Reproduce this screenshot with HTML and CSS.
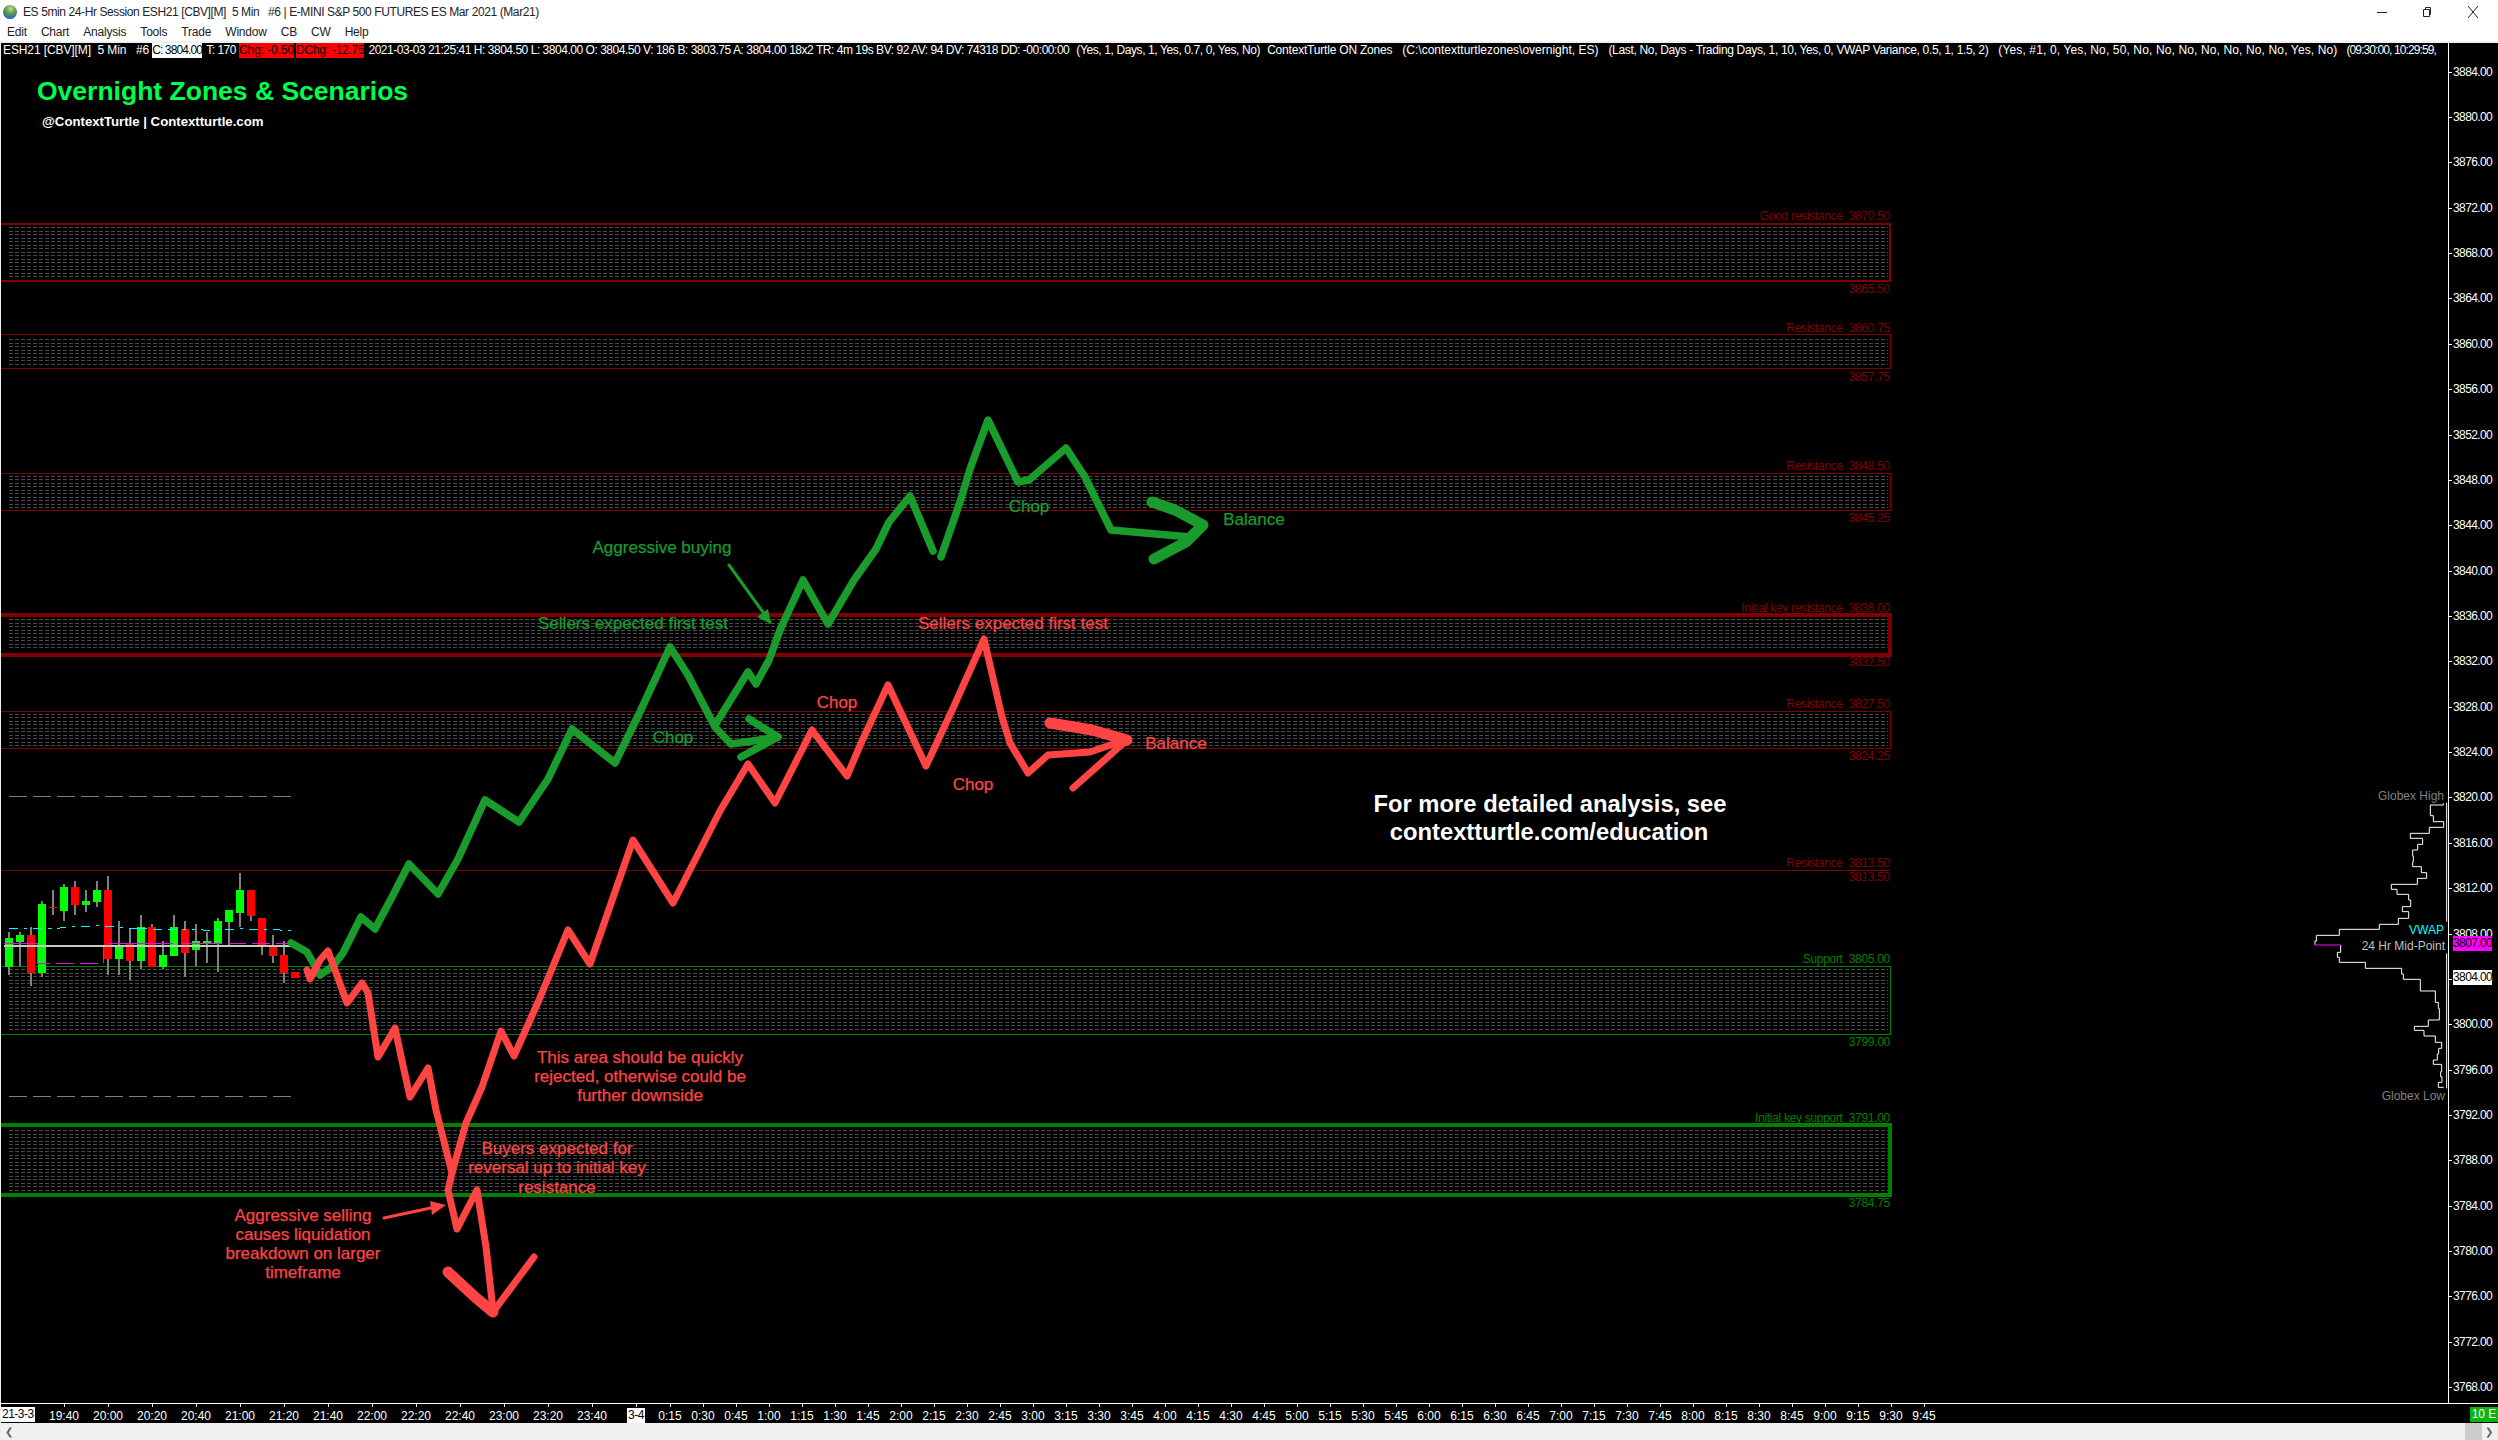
FILE: index.html
```html
<!DOCTYPE html>
<html lang="en">
<head>
    <meta charset="UTF-8">
    <meta name="viewport" content="width=device-width, initial-scale=1.0">
    <title>ES 5min 24-Hr Session ESH21</title>
    <link rel="stylesheet" href="styles.css">
</head>
<body>
    <header class="title-bar">
        <svg class="app-icon" width="14" height="16" viewBox="0 0 14 16">
            <defs>
                <radialGradient id="globe" cx="55%" cy="25%" r="85%">
                    <stop offset="0" stop-color="#c4dc8c"/>
                    <stop offset="0.45" stop-color="#5a9a50"/>
                    <stop offset="1" stop-color="#1a5cb0"/>
                </radialGradient>
            </defs>
            <circle cx="7" cy="8" r="7" fill="url(#globe)"/>
            <path d="M1 11 Q7 15 13 11 Q11 15 7 15 Q3 15 1 11Z" fill="#2c74c4"/>
        </svg>
        <span class="title-text">ES 5min 24-Hr Session ESH21 [CBV][M]  5 Min   #6 | E-MINI S&amp;P 500 FUTURES ES Mar 2021 (Mar21)</span>
        <div class="window-buttons">
            <svg width="12" height="12" viewBox="0 0 12 12"><path d="M1 6.5H11" stroke="#222" fill="none"/></svg>
            <svg width="12" height="12" viewBox="0 0 12 12"><path d="M3.5 3.5H9.5V10.5H3.5ZM5.5 3.5V1.5H10.5V8.5H9.5" stroke="#222" fill="none"/></svg>
            <svg class="close-icon" width="12" height="14" viewBox="0 0 12 14"><path d="M1 1L11 13M11 1L1 13" stroke="#222" fill="none"/></svg>
        </div>
    </header>

    <nav class="menu-bar">
        <span>Edit</span>
        <span>Chart</span>
        <span>Analysis</span>
        <span>Tools</span>
        <span>Trade</span>
        <span>Window</span>
        <span>CB</span>
        <span>CW</span>
        <span>Help</span>
    </nav>

    <main class="chart-window">
        <div class="chart-row">
            <div class="plot">
                <svg class="plot-canvas" width="2447" height="1360" viewBox="1 43 2447 1360">
                    <defs>
                        <pattern id="dots" x="9" y="0" width="6" height="7" patternUnits="userSpaceOnUse">
                            <rect width="4" height="1" fill="#4a4a4a"/>
                            <rect y="3" width="4" height="1" fill="#4a4a4a"/>
                        </pattern>
                    </defs>

                    <!-- zones -->
                    <g class="zones">
                        <rect class="fill" x="9" y="227" width="1879" height="52"/>
                        <rect class="fill" x="9" y="337" width="1879" height="29"/>
                        <rect class="fill" x="9" y="476" width="1879" height="32"/>
                        <rect class="fill" x="9" y="619" width="1879" height="32"/>
                        <rect class="fill" x="9" y="714" width="1879" height="32"/>
                        <rect class="fill" x="9" y="969" width="1879" height="63"/>
                        <rect class="fill" x="9" y="1129" width="1879" height="62"/>

                        <rect class="edge red w2" x="-5" y="224" width="1895" height="57"/>
                        <rect class="edge red" x="-5" y="334.5" width="1895" height="34"/>
                        <rect class="edge red" x="-5" y="473.5" width="1895" height="37"/>
                        <rect class="edge red w4" x="-5" y="615" width="1895" height="40"/>
                        <rect class="edge red" x="-5" y="711.5" width="1895" height="37"/>
                        <path class="edge red" d="M0 870.5H1890"/>
                        <rect class="edge green" x="-5" y="966.5" width="1895" height="68"/>
                        <rect class="edge green w4" x="-5" y="1125" width="1895" height="70"/>
                    </g>

                    <g class="zone-labels red">
                        <text x="1890" y="216">Good resistance  3870.50</text>
                        <text x="1890" y="289">3865.50</text>
                        <text x="1890" y="328">Resistance  3860.75</text>
                        <text x="1890" y="377">3857.75</text>
                        <text x="1890" y="466">Resistance  3848.50</text>
                        <text x="1890" y="518">3845.25</text>
                        <text x="1890" y="608">Initial key resistance  3836.00</text>
                        <text x="1890" y="662">3832.50</text>
                        <text x="1890" y="704">Resistance  3827.50</text>
                        <text x="1890" y="756">3824.25</text>
                        <text x="1890" y="863">Resistance  3813.50</text>
                        <text x="1890" y="877">3813.50</text>
                    </g>
                    <g class="zone-labels green">
                        <text x="1890" y="959">Support  3805.00</text>
                        <text x="1890" y="1042">3799.00</text>
                        <text x="1890" y="1118">Initial key support  3791.00</text>
                        <text x="1890" y="1203">3784.75</text>
                    </g>

                    <path class="globex-line" d="M9 796.5H291M9 1096.5H291"/>

                    <!-- candles, drawn in 3x units -->
                    <g transform="translate(0 780) scale(0.33333)" shape-rendering="crispEdges">
                        <g class="wicks">
                            <rect x="24" y="456" width="6" height="129"/>
                            <rect x="57" y="456" width="6" height="102"/>
                            <rect x="90" y="441" width="6" height="177"/>
                            <rect x="123" y="363" width="6" height="228"/>
                            <rect x="156" y="330" width="6" height="75"/>
                            <rect x="189" y="312" width="6" height="111"/>
                            <rect x="222" y="303" width="6" height="102"/>
                            <rect x="255" y="330" width="6" height="66"/>
                            <rect x="288" y="303" width="6" height="78"/>
                            <rect x="321" y="288" width="6" height="297"/>
                            <rect x="354" y="423" width="6" height="162"/>
                            <rect x="387" y="444" width="6" height="156"/>
                            <rect x="420" y="405" width="6" height="162"/>
                            <rect x="453" y="432" width="6" height="129"/>
                            <rect x="486" y="483" width="6" height="84"/>
                            <rect x="519" y="405" width="6" height="123"/>
                            <rect x="552" y="423" width="6" height="168"/>
                            <rect x="585" y="432" width="6" height="126"/>
                            <rect x="618" y="456" width="6" height="93"/>
                            <rect x="651" y="414" width="6" height="162"/>
                            <rect x="684" y="390" width="6" height="108"/>
                            <rect x="717" y="279" width="6" height="162"/>
                            <rect x="750" y="330" width="6" height="93"/>
                            <rect x="783" y="414" width="6" height="111"/>
                            <rect x="816" y="465" width="6" height="84"/>
                            <rect x="849" y="483" width="6" height="126"/>
                        </g>
                        <g class="bodies-up">
                            <rect x="15" y="474" width="24" height="87"/>
                            <rect x="48" y="465" width="24" height="21"/>
                            <rect x="114" y="372" width="24" height="207"/>
                            <rect x="180" y="321" width="24" height="72"/>
                            <rect x="246" y="363" width="24" height="12"/>
                            <rect x="279" y="330" width="24" height="36"/>
                            <rect x="345" y="501" width="24" height="36"/>
                            <rect x="411" y="441" width="24" height="102"/>
                            <rect x="477" y="525" width="24" height="36"/>
                            <rect x="510" y="441" width="24" height="87"/>
                            <rect x="576" y="483" width="24" height="27"/>
                            <rect x="609" y="483" width="24" height="9"/>
                            <rect x="642" y="423" width="24" height="66"/>
                            <rect x="675" y="390" width="24" height="36"/>
                            <rect x="708" y="330" width="24" height="69"/>
                        </g>
                        <g class="bodies-down">
                            <rect x="81" y="465" width="24" height="114"/>
                            <rect x="147" y="381" width="24" height="3"/>
                            <rect x="213" y="321" width="24" height="54"/>
                            <rect x="312" y="330" width="24" height="207"/>
                            <rect x="378" y="489" width="24" height="54"/>
                            <rect x="444" y="441" width="24" height="120"/>
                            <rect x="543" y="447" width="24" height="72"/>
                            <rect x="741" y="330" width="24" height="78"/>
                            <rect x="774" y="414" width="24" height="81"/>
                            <rect x="807" y="501" width="24" height="27"/>
                            <rect x="840" y="525" width="24" height="54"/>
                            <rect x="873" y="576" width="24" height="18"/>
                        </g>
                        <path class="study cyan" d="M27 445H53M72 445H82M100 445H126M145 445H155M172 445H180M180 442H198M216 439H226M243 439H270M288 436H298M316 439H342M360 442H370M388 445H440M460 448H486M504 448H530M548 448H558M576 448H585M603 448H610M610 451H630M648 448H658M675 448H702M720 445H730M747 448H774M792 448H802M820 448H840M840 451H846M864 451H873"/>
                        <path class="study magenta" d="M12 490H112V550H150M168 550H222M240 550H294M310 498V548M324 490H520M545 490H665M688 490H738M757 490H810M828 490H870"/>
                        <path class="study mid" d="M12 498H870"/>
                    </g>

                    <!-- volume profile, drawn in 3x units -->
                    <g transform="translate(2250 770) scale(0.33333)">
                        <path class="profile" d="M580 100V105H541V137H550V155H581V172H538V190H481V205H518V223H503V240H488V258H490V275H488V290H514V308H530V325H502V343H424V358H441V373H476V390H482V410H457V425H476V445H445V463H388V478H268V496H199V513H195V525M272 525V547H262V562H268V577H346V595H455V612H460V628H511V663H556V697H565V715H568V750H535V769H493V781H522V798H556V817H575V835H566V852H562V870H550V883H575V905H572V920H576V937H565V952H581"/>
                        <path class="profile magenta-line" d="M195 525H272"/>
                        <path class="profile" d="M590 98V455M590 550V955"/>
                    </g>
                    <g class="side-labels">
                        <text class="dim" x="2444" y="796">Globex High</text>
                        <text class="vwap" x="2444" y="930">VWAP</text>
                        <text class="light" x="2445" y="946">24 Hr Mid-Point</text>
                        <text class="dim" x="2445" y="1096">Globex Low</text>
                    </g>

                    <!-- hand drawn scenarios -->
                    <g class="scribble green">
                        <polyline points="291,943 307,952 320,975 333,966 343,953 361,917 375,929 392,897 409,864 438,894 458,859 485,800 519,822 548,779 572,729 615,763 639,714 670,647 688,675 715,727 731,744 746,742 778,737"/>
                        <polyline points="749,719 778,737 741,757"/>
                        <polyline points="715,725 748,672 756,684 769,660 780,630 803,580 828,624 854,580 876,549 889,522 910,496 933,551"/>
                        <polyline points="941,557 961,499 970,469 988,420 1018,482 1029,480 1066,448 1085,477 1111,530 1190,537"/>
                        <polyline class="heavy" points="1152,502 1175,510 1203,525 1186,542 1154,559"/>
                    </g>
                    <path class="thin-arrow green" d="M729 565L770 622"/>
                    <path class="arrow-head green" d="M771 624L768 609L757 617Z"/>

                    <g class="scribble red">
                        <polyline points="307,970 310,979 320,960 328,951 335,970 347,1003 362,983 368,993 378,1057 395,1028 404,1070 410,1097 428,1068 436,1110 452,1173 448,1190 457,1229 477,1190 486,1247 493,1310"/>
                        <polyline class="heavy" points="448,1272 475,1297 493,1312"/>
                        <polyline points="493,1312 534,1257"/>
                        <polyline points="452,1173 466,1123 482,1087 501,1031 514,1056 539,1000 568,930 590,964 633,840 673,903 720,811 748,764 775,803 812,730 847,776 862,741 888,685 926,766 954,706 984,639 1002,717 1010,743 1028,773 1048,755 1090,752 1125,740"/>
                        <polyline class="heavy" points="1050,723 1092,730 1127,740"/>
                        <polyline points="1127,740 1073,788"/>
                    </g>
                    <path class="thin-arrow red" d="M384 1218L440 1206"/>
                    <path class="arrow-head red" d="M446 1205L430 1201L432 1215Z"/>

                    <!-- annotations -->
                    <text class="chart-title" x="37" y="91">Overnight Zones &amp; Scenarios</text>
                    <text class="chart-subtitle" x="42" y="121">@ContextTurtle | Contextturtle.com</text>

                    <g class="note green">
                        <text x="662" y="547">Aggressive buying</text>
                        <text x="633" y="623">Sellers expected first test</text>
                        <text x="673" y="737">Chop</text>
                        <text x="1029" y="506">Chop</text>
                        <text x="1254" y="519">Balance</text>
                    </g>
                    <g class="note red">
                        <text x="1013" y="623">Sellers expected first test</text>
                        <text x="837" y="702">Chop</text>
                        <text x="973" y="784">Chop</text>
                        <text x="1176" y="743">Balance</text>
                        <text x="640" y="1057">This area should be quickly</text>
                        <text x="640" y="1076">rejected, otherwise could be</text>
                        <text x="640" y="1095">further downside</text>
                        <text x="557" y="1148">Buyers expected for</text>
                        <text x="557" y="1167">reversal up to initial key</text>
                        <text x="557" y="1187">resistance</text>
                        <text x="303" y="1215">Aggressive selling</text>
                        <text x="303" y="1234">causes liquidation</text>
                        <text x="303" y="1253">breakdown on larger</text>
                        <text x="303" y="1272">timeframe</text>
                    </g>
                    <text class="promo" x="1550" y="803">For more detailed analysis, see</text>
                    <text class="promo" x="1549" y="831">contextturtle.com/education</text>
                </svg>

                <div class="info-line">
                    <span class="seg-symbol">ESH21 [CBV][M]  5 Min   #6</span>
                    <span class="chip-white">C: 3804.00</span>
                    <span class="seg-ticks">T: 170</span>
                    <span class="chip-red seg-chg">Chg: -0.50</span>
                    <span class="chip-red seg-dchg">DChg: -12.75</span>
                    <span class="seg-quote">2021-03-03 21:25:41 H: 3804.50 L: 3804.00 O: 3804.50 V: 186 B: 3803.75 A: 3804.00 18x2 TR: 4m 19s BV: 92 AV: 94 DV: 74318 DD: -00:00:00</span>
                    <span class="seg-a">(Yes, 1, Days, 1, Yes, 0.7, 0, Yes, No)</span>
                    <span class="seg-b">ContextTurtle ON Zones</span>
                    <span class="seg-c">(C:\contextturtlezones\overnight, ES)</span>
                    <span class="seg-d">(Last, No, Days - Trading Days, 1, 10, Yes, 0, VWAP Variance, 0.5, 1, 1.5, 2)</span>
                    <span class="seg-e">(Yes, #1, 0, Yes, No, 50, No, No, No, No, No, No, No, Yes, No)</span>
                    <span class="seg-f">(09:30:00, 10:29:59,</span>
                </div>
            </div>

            <div class="price-axis">
                <div class="price">3884.00</div>
                <div class="price">3880.00</div>
                <div class="price">3876.00</div>
                <div class="price">3872.00</div>
                <div class="price">3868.00</div>
                <div class="price">3864.00</div>
                <div class="price">3860.00</div>
                <div class="price">3856.00</div>
                <div class="price">3852.00</div>
                <div class="price">3848.00</div>
                <div class="price">3844.00</div>
                <div class="price">3840.00</div>
                <div class="price">3836.00</div>
                <div class="price">3832.00</div>
                <div class="price">3828.00</div>
                <div class="price">3824.00</div>
                <div class="price">3820.00</div>
                <div class="price">3816.00</div>
                <div class="price">3812.00</div>
                <div class="price">3808.00</div>
                <div class="price">3804.00</div>
                <div class="price">3800.00</div>
                <div class="price">3796.00</div>
                <div class="price">3792.00</div>
                <div class="price">3788.00</div>
                <div class="price">3784.00</div>
                <div class="price">3780.00</div>
                <div class="price">3776.00</div>
                <div class="price">3772.00</div>
                <div class="price">3768.00</div>
                <div class="price-flag flag-mid">3807.00</div>
                <div class="price-flag flag-last">3804.00</div>
            </div>
        </div>

        <div class="time-axis">
            <div class="day-start"><span class="date-chip">21-3-3</span></div>
            <div class="tick wide">19:40</div>
            <div class="tick wide">20:00</div>
            <div class="tick wide">20:20</div>
            <div class="tick wide">20:40</div>
            <div class="tick wide">21:00</div>
            <div class="tick wide">21:20</div>
            <div class="tick wide">21:40</div>
            <div class="tick wide">22:00</div>
            <div class="tick wide">22:20</div>
            <div class="tick wide">22:40</div>
            <div class="tick wide">23:00</div>
            <div class="tick wide">23:20</div>
            <div class="tick wide">23:40</div>
            <div class="tick wide"><span class="date-chip">3-4</span></div>
            <div class="tick after-date">0:15</div>
            <div class="tick">0:30</div>
            <div class="tick">0:45</div>
            <div class="tick">1:00</div>
            <div class="tick">1:15</div>
            <div class="tick">1:30</div>
            <div class="tick">1:45</div>
            <div class="tick">2:00</div>
            <div class="tick">2:15</div>
            <div class="tick">2:30</div>
            <div class="tick">2:45</div>
            <div class="tick">3:00</div>
            <div class="tick">3:15</div>
            <div class="tick">3:30</div>
            <div class="tick">3:45</div>
            <div class="tick">4:00</div>
            <div class="tick">4:15</div>
            <div class="tick">4:30</div>
            <div class="tick">4:45</div>
            <div class="tick">5:00</div>
            <div class="tick">5:15</div>
            <div class="tick">5:30</div>
            <div class="tick">5:45</div>
            <div class="tick">6:00</div>
            <div class="tick">6:15</div>
            <div class="tick">6:30</div>
            <div class="tick">6:45</div>
            <div class="tick">7:00</div>
            <div class="tick">7:15</div>
            <div class="tick">7:30</div>
            <div class="tick">7:45</div>
            <div class="tick">8:00</div>
            <div class="tick">8:15</div>
            <div class="tick">8:30</div>
            <div class="tick">8:45</div>
            <div class="tick">9:00</div>
            <div class="tick">9:15</div>
            <div class="tick">9:30</div>
            <div class="tick">9:45</div>
            <div class="mode-chip">10 E</div>
        </div>
    </main>

    <div class="scroll-bar">
        <span class="chevron">&#10094;</span>
        <span class="scroll-thumb"></span>
        <span class="chevron">&#10095;</span>
    </div>
</body>
</html>
```

FILE: styles.css
```css
html, body {
    margin: 0;
    padding: 0;
}

body {
    width: 2498px;
    height: 1440px;
    overflow: hidden;
    background-color: #fff;
    color: #222;
    font-family: "Liberation Sans Narrow", "Liberation Sans", Arial, sans-serif;
}

/* window chrome */
.title-bar {
    display: flex;
    align-items: center;
    height: 23px;
    padding-left: 3px;
    font-size: 12px;
    letter-spacing: -0.4px;
}

.app-icon {
    margin-right: 6px;
}

.title-text {
    white-space: pre;
}

.window-buttons {
    display: flex;
    align-items: center;
    gap: 32px;
    margin-left: auto;
    padding-right: 19px;
}

.close-icon {
    margin-left: 3px;
}

.menu-bar {
    display: flex;
    align-items: center;
    gap: 14px;
    height: 18px;
    padding-left: 7px;
    border-bottom: 2px solid #f0f0f0;
    font-size: 12px;
    letter-spacing: -0.2px;
}

/* chart */
.chart-window {
    border-left: 1px solid #f0f0f0;
    background-color: #000;
    color: #fff;
    font-size: 12px;
}

.chart-row {
    display: flex;
    height: 1360px;
}

.plot {
    position: relative;
    width: 2447px;
    overflow: hidden;
}

.plot-canvas {
    display: block;
}

/* each part of the status line was squeezed by a different amount */
.info-line {
    position: absolute;
    top: 0;
    left: 2px;
    display: flex;
    gap: 3px;
    height: 15px;
    line-height: 15px;
    white-space: pre;
    letter-spacing: -0.47px;
}

.seg-symbol {
    letter-spacing: -0.1px;
}

.chip-white {
    background-color: #fff;
    color: #000;
    letter-spacing: -0.87px;
}

.seg-ticks {
    margin-left: 1px;
}

.chip-red {
    background-color: #f00;
    color: #000;
}

.seg-chg {
    letter-spacing: -0.1px;
}

.seg-dchg {
    margin-left: -1px;
    letter-spacing: -0.25px;
}

.seg-quote {
    margin-left: 1px;
}

.seg-a {
    margin-left: 4px;
    letter-spacing: -0.39px;
}

.seg-b {
    margin-left: 4px;
    letter-spacing: -0.2px;
}

.seg-c {
    margin-left: 7px;
    letter-spacing: 0;
}

.seg-d {
    margin-left: 7px;
    letter-spacing: -0.33px;
}

.seg-e {
    margin-left: 7px;
    letter-spacing: 0.13px;
}

.seg-f {
    margin-left: 6px;
    letter-spacing: -0.9px;
}

/* zones */
.zones .fill {
    fill: url(#dots);
}

.edge {
    fill: none;
    stroke-width: 1;
    shape-rendering: crispEdges;
}

.edge.red {
    stroke: #800000;
}

.edge.green {
    stroke: #008000;
}

.edge.w2 {
    stroke-width: 2;
}

.edge.w4 {
    stroke-width: 4;
}

.zone-labels text {
    font-size: 12px;
    letter-spacing: -0.3px;
    text-anchor: end;
    dominant-baseline: central;
    white-space: pre;
}

.zone-labels.red text {
    fill: #800000;
}

.zone-labels.green text {
    fill: #008000;
}

.globex-line {
    stroke: #808080;
    stroke-width: 1;
    stroke-dasharray: 18 6;
    fill: none;
    shape-rendering: crispEdges;
}

/* candles */
.wicks rect {
    fill: #808080;
}

.bodies-up rect {
    fill: #0f0;
}

.bodies-down rect {
    fill: #f00;
}

.study {
    fill: none;
    stroke-width: 3;
}

.study.cyan {
    stroke: #0ff;
}

.study.magenta {
    stroke: #e010e0;
}

.study.mid {
    stroke: #c8c8c8;
    stroke-width: 6;
}

/* volume profile */
.profile {
    fill: none;
    stroke: #fff;
    stroke-width: 3;
}

.profile.magenta-line {
    stroke: #f0f;
}

.side-labels text {
    font-size: 12px;
    text-anchor: end;
    dominant-baseline: central;
}

.side-labels .dim {
    fill: #808080;
}

.side-labels .light {
    fill: #c0c0c0;
}

.side-labels .vwap {
    fill: #0ff;
}

/* hand drawn lines */
.scribble {
    fill: none;
    stroke-linecap: round;
    stroke-linejoin: round;
}

.scribble.green {
    stroke: #1a9c2d;
    stroke-width: 7.5;
}

.scribble.red {
    stroke: #ff4444;
    stroke-width: 7;
}

.scribble .heavy {
    stroke-width: 11;
}

.thin-arrow {
    fill: none;
    stroke-width: 3;
    stroke-linecap: round;
}

.thin-arrow.green {
    stroke: #1a9c2d;
}

.thin-arrow.red {
    stroke: #ff4444;
}

.arrow-head.green {
    fill: #1a9c2d;
}

.arrow-head.red {
    fill: #ff4444;
}

/* annotations */
.chart-title {
    font-family: "Liberation Sans", Arial, sans-serif;
    font-size: 26.5px;
    font-weight: 700;
    fill: #00ff4c;
    dominant-baseline: central;
}

.chart-subtitle {
    font-family: "Liberation Sans", Arial, sans-serif;
    font-size: 13.2px;
    font-weight: 700;
    fill: #fff;
    dominant-baseline: central;
}

.note text {
    font-family: "Liberation Sans", Arial, sans-serif;
    font-size: 17px;
    stroke-width: 0.25;
    text-anchor: middle;
    dominant-baseline: central;
}

.note.green text {
    fill: #1a9c2d;
    stroke: #1a9c2d;
}

.note.red text {
    fill: #ff4444;
    stroke: #ff4444;
}

.promo {
    font-family: "Liberation Sans", Arial, sans-serif;
    font-size: 23.8px;
    font-weight: 700;
    fill: #fff;
    text-anchor: middle;
    dominant-baseline: central;
}

/* price axis */
.price-axis {
    position: relative;
    flex: 1;
    padding-top: 6px;
    border-left: 1px solid #fff;
    letter-spacing: -0.6px;
}

.price {
    position: relative;
    display: flex;
    align-items: center;
    height: 45.36px;
    padding-left: 4px;
}

.price::before {
    content: "";
    position: absolute;
    left: 0;
    top: 50%;
    width: 3px;
    height: 1px;
    background-color: #fff;
}

.price-flag {
    position: absolute;
    left: 4px;
    width: 39px;
    height: 15px;
    line-height: 15px;
    color: #000;
}

.flag-mid {
    top: 893px;
    background-color: #f0f;
}

.flag-last {
    top: 927px;
    background-color: #fff;
}

/* time axis */
.time-axis {
    display: flex;
    height: 19px;
    border-top: 1px solid #fff;
    margin-left: -1px;
}

.day-start {
    width: 42px;
    padding: 3px 0 0 1px;
    box-sizing: border-box;
}

.tick {
    position: relative;
    display: flex;
    justify-content: center;
    align-items: center;
    flex: none;
    width: 33px;
    height: 19px;
    padding-top: 4px;
    box-sizing: border-box;
}

.tick.wide {
    width: 44px;
}

.tick.after-date {
    margin-left: -4.5px;
}

.tick::before {
    content: "";
    position: absolute;
    top: 0;
    left: 50%;
    width: 1px;
    height: 3px;
    background-color: #fff;
}

.date-chip {
    display: inline-block;
    height: 15px;
    line-height: 15px;
    padding: 0 1px;
    background-color: #fff;
    color: #000;
    letter-spacing: -0.5px;
}

.mode-chip {
    align-self: flex-end;
    width: 28px;
    height: 15px;
    margin: 0 0 1px auto;
    line-height: 15px;
    text-align: center;
    background-color: #0cb40c;
    color: #fff;
}

/* scroll bar */
.scroll-bar {
    display: flex;
    align-items: center;
    height: 17px;
    padding: 0 5px;
    background-color: #f0f0f0;
    color: #606060;
    font-size: 10px;
}

.scroll-thumb {
    width: 17px;
    height: 17px;
    margin-left: auto;
    margin-right: 3px;
    background-color: #cdcdcd;
}
```
